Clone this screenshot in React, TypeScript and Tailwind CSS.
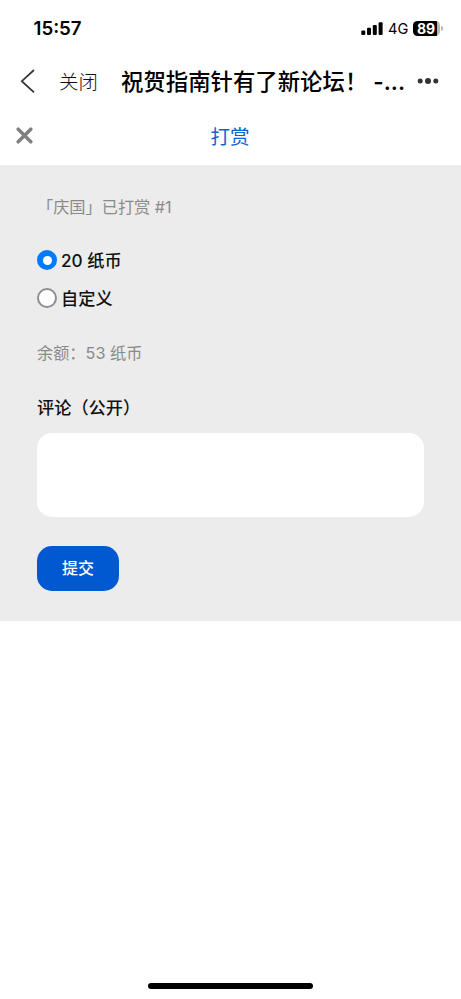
import React, { useState } from 'react';

const StatusBar: React.FC = () => (
  <div className="flex h-[57px] items-center justify-between pl-[33.5px] pr-[18px]">
    <span className="pt-[2px] text-[18.7px] font-semibold leading-none text-black">15:57</span>
    <div className="flex items-center">
      <svg className="h-[14px] w-[22px]" viewBox="0 0 22 14" fill="#000">
        <rect x="0.3" y="8.4" width="4" height="4.5" rx="1" />
        <rect x="6" y="5.8" width="4" height="7.1" rx="1" />
        <rect x="11.8" y="3" width="4" height="9.9" rx="1" />
        <rect x="17.6" y="0.2" width="4" height="12.7" rx="1" />
      </svg>
      <span className="ml-[5px] w-[21px] pt-px text-[14.6px] leading-none text-black">4G</span>
      <div className="ml-[4px] flex h-[15px] w-[27px] items-center justify-center rounded-[4.5px] bg-[linear-gradient(to_right,#000_90%,#b8b8b8_90%)] pr-[1px] text-[14px] font-bold leading-none text-white">
        89
      </div>
      <div className="ml-px h-[5px] w-[2px] rounded-r-full bg-[#b8b8b8]" />
    </div>
  </div>
);

const NavBar: React.FC = () => (
  <div className="flex h-[50px] items-center whitespace-nowrap pl-[20px]">
    <svg className="mb-[2px] h-[24px] w-[16px]" viewBox="0 0 16 24" fill="none" stroke="#333" strokeWidth="1.7">
      <path d="M14 1 L1.8 12.2 L14 23.4" />
    </svg>
    <button className="ml-[23px] w-[62px] pt-[2px] text-left text-[19.5px] font-light text-[#111]">关闭</button>
    <h1 className="w-[296px] text-[22.4px] font-medium text-black">
      祝贺指南针有了新论坛！ <span className="font-semibold">-...</span>
    </h1>
    <svg className="mb-[2px] h-[8px] w-[22px] shrink-0" viewBox="0 0 22 8" fill="#333">
      <circle cx="3.2" cy="4" r="2.5" />
      <circle cx="11" cy="4" r="3" />
      <circle cx="18.8" cy="4" r="2.5" />
    </svg>
  </div>
);

const ModalHeader: React.FC = () => (
  <div className="grid h-[58px] grid-cols-[60px_1fr_60px] items-center">
    <button className="pb-[1px] pl-[16px]">
      <svg className="h-[17px] w-[17px]" viewBox="0 0 17 17" fill="none" stroke="#808080" strokeWidth="3.5" strokeLinecap="round">
        <path d="M2.2 2.2 L14.8 14.8 M14.8 2.2 L2.2 14.8" />
      </svg>
    </button>
    <h2 className="pr-[1px] pt-[4px] text-center text-[19.6px] text-[#0d63d2]">打赏</h2>
  </div>
);

interface RadioProps {
  label: string;
  checked: boolean;
  onSelect: () => void;
}

const Radio: React.FC<RadioProps> = ({ label, checked, onSelect }) => (
  <label className="flex h-[38px] items-center gap-[4px] text-[17.2px] font-medium text-[#111]">
    <input type="radio" name="amount" className="sr-only" checked={checked} onChange={onSelect} />
    <span
      className={
        checked
          ? 'flex h-[20px] w-[20px] items-center justify-center rounded-full bg-[#007aff]'
          : 'h-[20px] w-[20px] rounded-full border-2 border-[#8e8e90] bg-white'
      }
    >
      {checked && <span className="h-[9px] w-[9px] rounded-full bg-white" />}
    </span>
    <span className="pt-[2px]">{label}</span>
  </label>
);

export default function App() {
  const [custom, setCustom] = useState(false);
  const [comment, setComment] = useState('');

  return (
    <div className="flex h-[999px] w-[461px] flex-col overflow-hidden bg-white font-['Inter','Noto_Sans_CJK_SC',sans-serif]">
      <StatusBar />
      <NavBar />
      <ModalHeader />
      <main className="h-[456px] bg-[#ececec] px-[37px] pt-[30px]">
        <p className="h-[24px] text-[16.2px] leading-[24px] text-[#8a8a8a]">「庆国」已打赏 #1</p>
        <div className="mt-[22px]">
          <Radio label="20 纸币" checked={!custom} onSelect={() => setCustom(false)} />
          <Radio label="自定义" checked={custom} onSelect={() => setCustom(true)} />
        </div>
        <p className="mt-[24px] h-[24px] text-[16.2px] leading-[24px] text-[#8a8a8a]">余额：53 纸币</p>
        <h3 className="mt-[29px] h-[26px] pt-[1px] text-[17.2px] font-medium leading-[26px] text-[#111]">评论（公开）</h3>
        <textarea
          className="mt-[13px] block h-[84px] w-[387px] resize-none rounded-[15px] bg-white p-3 outline-none"
          value={comment}
          onChange={(e) => setComment(e.target.value)}
        />
        <button className="mt-[29px] flex h-[45px] w-[82px] items-center justify-center rounded-[15px] bg-[#0059d1] pb-[2px] text-[16px] font-medium text-white">
          提交
        </button>
      </main>
      <div className="mx-auto mb-[10px] mt-auto h-[6px] w-[165px] rounded-full bg-black" />
    </div>
  );
}
